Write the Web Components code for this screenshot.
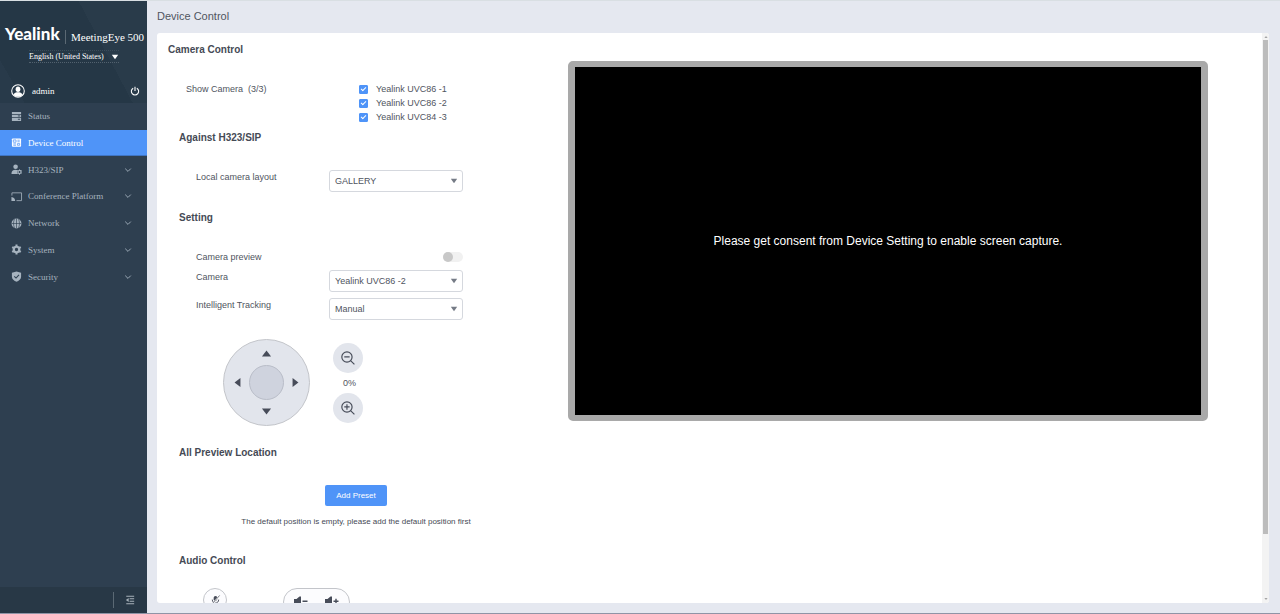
<!DOCTYPE html>
<html lang="en">
<head>
<meta charset="utf-8">
<meta name="viewport" content="width=device-width, initial-scale=1">
<title>Device Control</title>
<style>
html, body { margin: 0; height: 100%; }
body { font-family: "Liberation Sans", Arial, sans-serif; font-size: 9px; line-height: 14px; color: #4f545e; background: #e5e8f0; }
</style>
</head>
<body>
<meeting-app></meeting-app>
<script>
const define = (name, markup, setup) => {
  const template = document.createElement('template');
  template.innerHTML = markup;
  customElements.define(name, class extends HTMLElement {
    constructor() {
      super();
      this.attachShadow({ mode: 'open' }).append(template.content.cloneNode(true));
    }
    connectedCallback() { if (setup) setup(this, this.shadowRoot); }
  });
};

/* ---------- icons ---------- */
const ICONS = {
  status: '<path d="M1 1h10v2.4H1zM1 4.2h10v2.4H1zM1 7.4h10V11H1z" fill="currentColor"/><path d="M7.500 5.400h2.500M7.500 9h2.500" stroke="#2e3f50"/>',
  device: '<rect x="1" y="1.500" width="10" height="9" rx="1" fill="currentColor"/><path d="M2.500 3.200h3v2.500h-3zM2.500 7.500h3M2.500 9h3M7 3.500h2.500M7 5.200h2.500M7 7.200h2.500v1.800H7z" fill="none" stroke="#4f94f8" stroke-width=".8"/>',
  user: '<circle cx="5" cy="3" r="2.500" fill="currentColor"/><path d="M.500 11c0-3.500 1.500-4.800 4.500-4.800 1 0 1.800.2 2.400.6L6.500 9l.8 2z" fill="currentColor"/><circle cx="9.300" cy="8.700" r="1.700" fill="none" stroke="currentColor" stroke-width="1.300"/><path d="M9.300 6v1M9.300 10.500v1.200M6.800 7.200l1 .6M11 9.600l.8.500M6.900 10.200l.8-.5M11 7.700l.8-.5" stroke="currentColor"/>',
  cast: '<path d="M1 5V2h10.500v8.500H6" fill="none" stroke="currentColor" stroke-width=".9"/><path d="M.500 6.500a4.500 4.500 0 0 1 4 4.500h-4z" fill="currentColor"/>',
  globe: '<circle cx="6" cy="6" r="5.400" fill="currentColor"/><path d="M6 .6v10.800M.600 6h10.800M3.800 1.200c-1.400 3-1.400 6.600 0 9.600M8.200 1.200c1.400 3 1.400 6.600 0 9.600" fill="none" stroke="#2e3f50" stroke-width=".7"/>',
  gear: '<circle cx="6" cy="6" r="3" fill="none" stroke="currentColor" stroke-width="2.400"/><path d="M6 .600v2M6 9.400v2M1.300 3.300l1.700 1M9 7.700l1.700 1M1.300 8.700l1.700-1M9 4.300l1.700-1" stroke="currentColor" stroke-width="2.200"/>',
  shield: '<path d="M6 .500l5 1.500v4.500c0 2.400-2.400 4.200-5 5.200-2.600-1-5-2.800-5-5.200V2z" fill="currentColor"/><path d="M3.600 5.800l1.900 1.900 3.200-3.400" fill="none" stroke="#2e3f50" stroke-width="1.200"/>',
  chevron: '<path d="M3.200 4.600L6 7.400l2.800-2.800" fill="none" stroke="currentColor" stroke-width=".9"/>',
  caret: '<path d="M1.200 2.800h9.600L6 9.200z" fill="currentColor"/>',
  avatar: '<circle cx="6" cy="6" r="5.400" fill="none" stroke="currentColor" stroke-width=".9"/><ellipse cx="6" cy="4.500" rx="2" ry="2.300" fill="currentColor"/><path d="M2.100 9.500C2.500 7.700 4 7.300 5 7h2c1 .3 2.500.7 2.900 2.500C8.800 10.500 7.500 11 6 11s-2.800-.5-3.900-1.500z" fill="currentColor"/>',
  power: '<path d="M3.800 2.600a4.400 4.400 0 1 0 4.400 0" fill="none" stroke="currentColor" stroke-width="1.300"/><path d="M6 1v5" stroke="currentColor" stroke-width="1.300"/>',
  collapse: '<path d="M1.500 1.500h9.500M5.500 4.500H11M5.500 7.500H11M1.500 10.500h9.500" stroke="currentColor" stroke-width="1.200"/><path d="M4.400 3.500v5L1 6z" fill="currentColor"/>',
  minus: '<circle cx="5.100" cy="5.100" r="4.400" fill="none" stroke="currentColor" stroke-width="1"/><path d="M2.800 5.100h4.600M8.200 8.200l3.300 3.300" fill="none" stroke="currentColor" stroke-width="1"/>',
  plus: '<circle cx="5.100" cy="5.100" r="4.400" fill="none" stroke="currentColor" stroke-width="1"/><path d="M2.800 5.100h4.600M5.100 2.800v4.600M8.200 8.200l3.300 3.300" fill="none" stroke="currentColor" stroke-width="1"/>',
  arrow: '<path d="M1 9.200L6 2.800l5 6.400z" fill="currentColor"/>',
  mic: '<rect x="4" y="1" width="4" height="6" rx="2" fill="currentColor"/><path d="M2.500 5c0 5 7 5 7 0M6 9v2M4 11h4" fill="none" stroke="currentColor"/><path d="M10.500 1l-8 9" stroke="#fff" stroke-width="1.800"/><path d="M10.500.500l-8 9" stroke="currentColor" stroke-width=".8"/>',
  quieter: '<path d="M-1 3h2.500l3-2.500H6v10H4.500L1.500 8H-1zM7.500 4.500h5V6h-5z" fill="currentColor"/>',
  louder: '<path d="M-1 3h2.500l3-2.500H6v10H4.500L1.500 8H-1zM7.500 4.500h5V6h-5zM9.300 2.700h1.400v5H9.300z" fill="currentColor"/>'
};
customElements.define('ui-icon', class extends HTMLElement {
  static observedAttributes = ['name'];
  constructor() { super(); this.attachShadow({ mode: 'open' }); }
  attributeChangedCallback() {
    this.shadowRoot.innerHTML = `<style>:host{display:block;flex:none;width:12px;height:12px}svg{display:block;width:100%;height:100%;overflow:visible}</style>
      <svg viewBox="0 0 12 12" aria-hidden="true">${ICONS[this.getAttribute('name')] || ''}</svg>`;
  }
});

/* ---------- sidebar ---------- */
define('nav-item', `<style>
  :host { display: grid; color: #a6b3bf; }
  a { display: flex; align-items: center; gap: 6px; padding: 0 13px 0 11px; color: inherit; text-decoration: none; }
  ui-icon { width: 11px; height: 11px; }
  span { flex: 1; }
  .more { width: 12px; height: 12px; }
  :host([active]) { background: #4f94f8; color: #fff; }
  :host([active]) a { border-bottom: 1px solid #3f75c4; }
</style><a href="#"><ui-icon></ui-icon><span><slot></slot></span></a>`, (host, root) => {
  root.querySelector('ui-icon').setAttribute('name', host.getAttribute('icon'));
  if (host.hasAttribute('more')) {
    const more = document.createElement('ui-icon');
    more.className = 'more';
    more.setAttribute('name', 'chevron');
    root.querySelector('a').append(more);
  }
});

define('side-bar', `<style>
  :host { display: flex; flex-direction: column; background: #2e3f50; color: #fff; font-family: "Liberation Serif", "Times New Roman", serif; font-size: 9px; }
  header { display: flex; flex-direction: column; height: 102px; background: linear-gradient(60deg, #283a4a 12%, transparent 12%), linear-gradient(62deg, #253746 66%, #293b4a 66%); }
  .brand { display: flex; align-items: flex-end; padding: 23px 0 0 5px; height: 20px; white-space: nowrap; }
  .brand b { font: 900 17px/20px Lato, sans-serif; width: 60px; }
  .brand span { font-size: 11px; line-height: 14px; padding-left: 5px; border-left: 1px solid #5b6974; }
  .lang { display: flex; align-items: center; width: 90px; margin: 6px 0 0 29px; border-top: 1px dotted #3b4c5a; border-bottom: 1px dotted #52616e; }
  .lang select { flex: 1; min-width: 0; appearance: none; border: 0; padding: 0; margin: 0; background: none; color: #fff; font: 8px/11px "Liberation Serif", serif; height: 11px; }
  .lang ui-icon { width: 8px; height: 8px; }
  .user { display: flex; align-items: center; margin-top: auto; padding: 0 7px 5px 11px; gap: 7px; }
  .user ui-icon { width: 14px; height: 14px; }
  .user span { flex: 1; }
  button { appearance: none; border: 0; padding: 0; background: none; color: inherit; }
  .user button ui-icon { width: 10px; height: 10px; }
  nav { display: grid; grid-template-rows: repeat(7, 1fr); height: 187px; }
  footer { display: flex; align-items: center; justify-content: flex-end; margin-top: auto; height: 26px; padding-right: 12px; background: #283846; color: #a7b1ba; }
  footer button { padding-left: 11px; border-left: 1px solid #5b6974; height: 16px; }
  footer ui-icon { width: 10px; height: 10px; }
</style>
<header>
  <div class="brand"><b>Yealink</b><span>MeetingEye 500</span></div>
  <div class="lang"><select aria-label="Language"><option>English (United States)</option></select><ui-icon name="caret"></ui-icon></div>
  <div class="user"><ui-icon name="avatar"></ui-icon><span>admin</span><button aria-label="Sign out"><ui-icon name="power"></ui-icon></button></div>
</header>
<nav>
  <nav-item icon="status">Status</nav-item>
  <nav-item icon="device" active>Device Control</nav-item>
  <nav-item icon="user" more>H323/SIP</nav-item>
  <nav-item icon="cast" more>Conference Platform</nav-item>
  <nav-item icon="globe" more>Network</nav-item>
  <nav-item icon="gear" more>System</nav-item>
  <nav-item icon="shield" more>Security</nav-item>
</nav>
<footer><button aria-label="Collapse menu"><ui-icon name="collapse"></ui-icon></button></footer>`);

/* ---------- form parts ---------- */
define('section-title', `<style>
  :host { display: block; }
  h2 { margin: 0; font-size: 10px; line-height: 14px; font-weight: 700; color: #454a55; }
</style><h2><slot></slot></h2>`);

define('check-option', `<style>
  :host { display: block; height: 14px; }
  label { display: flex; align-items: center; gap: 8px; height: 14px; white-space: pre; }
  input { appearance: none; display: grid; place-items: center; margin: 0; width: 9px; height: 9px; border-radius: 1px; background: #fff; border: 1px solid #4f94f8; box-sizing: border-box; }
  input:checked { background: #4f94f8; }
  input:checked::before { content: ""; width: 2px; height: 4px; margin-bottom: 1px; border: solid #fff; border-width: 0 1px 1px 0; transform: rotate(45deg); }
</style><label><input type="checkbox" checked><span></span></label>`, (host, root) => {
  root.querySelector('span').textContent = host.getAttribute('label');
});

define('select-field', `<style>
  :host { display: grid; grid-template-columns: 133px 134px; }
  .box { display: grid; align-items: center; }
  select, ui-icon { grid-area: 1 / 1; }
  select { appearance: none; width: 100%; height: 22px; margin: 0; padding: 0 18px 0 5px; border: 1px solid #d5d8de; border-radius: 3px; background: #fff; color: #4f545e; font: inherit; }
  ui-icon { width: 8px; height: 8px; justify-self: end; margin-right: 5px; color: #757b86; pointer-events: none; }
</style><label for="s"></label><div class="box"><select id="s"><option></option></select><ui-icon name="caret"></ui-icon></div>`, (host, root) => {
  root.querySelector('label').textContent = host.getAttribute('label');
  root.querySelector('option').textContent = host.getAttribute('value');
});

define('switch-field', `<style>
  :host { display: grid; grid-template-columns: 133px 134px; align-items: center; }
  input { appearance: none; justify-self: end; margin: 0; width: 20px; height: 10px; border-radius: 5px; background: #f1f1f1; display: flex; }
  input::before { content: ""; width: 10px; height: 10px; border-radius: 50%; background: #c8c8c8; }
  input:checked { background: #4f94f8; justify-content: flex-end; }
</style><label for="t"><slot></slot></label><input id="t" type="checkbox" role="switch" aria-label="Camera preview">`);

/* ---------- pan / tilt / zoom ---------- */
define('ptz-pad', `<style>
  :host { display: grid; box-sizing: border-box; width: 87px; height: 87px; padding: 8px; border: 1px solid #c3c5ca; border-radius: 50%; background: #e2e5ec; grid-template: 17px 1fr 17px / 17px 1fr 17px; place-items: center; }
  button { appearance: none; border: 0; padding: 0; background: none; color: #474c59; }
  ui-icon { width: 11px; height: 11px; }
  .up { grid-area: 1 / 2; align-self: start; } .left { grid-area: 2 / 1; justify-self: start; } .right { grid-area: 2 / 3; justify-self: end; } .down { grid-area: 3 / 2; align-self: end; }
  .left ui-icon { transform: rotate(-90deg); } .right ui-icon { transform: rotate(90deg); } .down ui-icon { transform: rotate(180deg); }
  .home { grid-area: 2 / 2; width: 35px; height: 35px; border: 1px solid #b9bdc8; border-radius: 50%; background: #cfd3de; }
</style>
<button class="up" aria-label="Up"><ui-icon name="arrow"></ui-icon></button>
<button class="left" aria-label="Left"><ui-icon name="arrow"></ui-icon></button>
<button class="home" aria-label="Home"></button>
<button class="right" aria-label="Right"><ui-icon name="arrow"></ui-icon></button>
<button class="down" aria-label="Down"><ui-icon name="arrow"></ui-icon></button>`);

define('zoom-control', `<style>
  :host { display: flex; flex-direction: column; align-items: center; gap: 3px; }
  button { appearance: none; display: grid; place-items: center; width: 30px; height: 30px; padding: 0; border: 0; border-radius: 50%; background: #e2e5ec; color: #474c59; }
  ui-icon { width: 14px; height: 14px; }
  span { padding-left: 3px; }
</style>
<button aria-label="Zoom out"><ui-icon name="minus"></ui-icon></button>
<span>0%</span>
<button aria-label="Zoom in"><ui-icon name="plus"></ui-icon></button>`);

define('audio-controls', `<style>
  :host { display: flex; align-items: flex-start; gap: 56px; }
  button { appearance: none; padding: 0; border: 0; background: none; color: #474c59; }
  .mic { display: grid; place-items: center; width: 24px; height: 24px; border: 1px solid #c3c5ca; border-radius: 50%; background: #fcfcfe; box-sizing: border-box; }
  .mic ui-icon { width: 11px; height: 11px; }
  .volume { display: flex; justify-content: space-between; align-items: center; box-sizing: border-box; width: 67px; height: 28px; padding: 0 11px; border: 1px solid #c3c5ca; border-radius: 14px; background: #fcfcfe; }
</style>
<button class="mic" aria-label="Mute microphone"><ui-icon name="mic"></ui-icon></button>
<div class="volume"><button aria-label="Volume down"><ui-icon name="quieter"></ui-icon></button><button aria-label="Volume up"><ui-icon name="louder"></ui-icon></button></div>`);

define('video-preview', `<style>
  :host { display: grid; place-items: center; box-sizing: border-box; aspect-ratio: 16 / 9; border: solid #a9a9a9; border-width: 6px 7px; border-radius: 5px; background: #000; color: #fff; font-size: 12px; line-height: 16px; text-align: center; }
</style><p><slot></slot></p>`);

define('scroll-rail', `<style>
  :host { display: grid; grid-template-rows: 7px 1fr 8px; width: 7px; background: #f3f3f3; color: #a5a5a5; justify-items: center; align-items: center; }
  i { justify-self: stretch; align-self: start; height: 89%; margin: 0 1px; background: #bcbcbc; }
  ui-icon { width: 4px; height: 4px; }
  .up { transform: rotate(180deg); }
</style><ui-icon class="up" name="caret"></ui-icon><i></i><ui-icon name="caret"></ui-icon>`);

/* ---------- page ---------- */
define('device-page', `<style>
  :host { display: flex; flex-direction: column; min-height: 0; min-width: 0; }
  h1 { margin: 0; padding: 8px 10px 9px; font-size: 11px; line-height: 15px; font-weight: 400; color: #50555f; }
  .card { display: flex; flex: 1; min-height: 0; margin: 0 11px 10px 10px; background: #fff; border-radius: 3px; overflow: hidden; }
  .scroll { display: flex; flex: 1; min-width: 0; padding: 10px 54px 24px 0; overflow: auto; scrollbar-width: none; }
  .form { flex: none; width: 400px; padding-left: 11px; box-sizing: border-box; }
  section { padding-left: 11px; }
  .cameras { display: grid; grid-template-columns: 173px 1fr; padding: 25px 0 7px 18px; }
  .cameras > span { white-space: pre; }
  .fields { display: grid; gap: 6px; padding: 25px 0 19px 17px; }
  .ptz { display: flex; align-items: center; gap: 23px; padding: 0 0 20px 44px; }
  .preset { display: flex; flex-direction: column; align-items: center; gap: 9px; width: 354px; padding: 25px 0; font-size: 8px; color: #454a55; }
  .preset button { appearance: none; margin: 0; border: 0; border-radius: 2px; width: 62px; height: 21px; padding: 0; background: #4f94f8; color: #fff; font: inherit; }
  .audio { padding: 20px 0 0 24px; }
  video-preview { flex: 1; align-self: flex-start; margin: 18px 0 0 11px; }
</style>
<h1>Device Control</h1>
<div class="card">
  <div class="scroll">
    <div class="form">
      <section-title>Camera Control</section-title>
      <div class="cameras"><span>Show Camera  (3/3)</span><div>
        <check-option label="Yealink UVC86 -1"></check-option>
        <check-option label="Yealink UVC86 -2"></check-option>
        <check-option label="Yealink UVC84 -3"></check-option>
      </div></div>
      <section>
        <section-title>Against H323/SIP</section-title>
        <div class="fields"><select-field label="Local camera layout" value="GALLERY"></select-field></div>
        <section-title>Setting</section-title>
        <div class="fields">
          <switch-field>Camera preview</switch-field>
          <select-field label="Camera" value="Yealink UVC86 -2"></select-field>
          <select-field label="Intelligent Tracking" value="Manual"></select-field>
        </div>
        <div class="ptz"><ptz-pad></ptz-pad><zoom-control></zoom-control></div>
        <section-title>All Preview Location</section-title>
        <div class="preset"><button>Add Preset</button><span>The default position is empty, please add the default position first</span></div>
        <section-title>Audio Control</section-title>
        <div class="audio"><audio-controls></audio-controls></div>
      </section>
    </div>
    <video-preview>Please get consent from Device Setting to enable screen capture.</video-preview>
  </div>
  <scroll-rail></scroll-rail>
</div>`);

define('meeting-app', `<style>
  :host { display: grid; grid-template-columns: 147px 1fr; grid-template-rows: minmax(0, 1fr); height: 100vh; box-sizing: border-box; border-top: 1px solid #d9dfe3; border-bottom: 1px solid #8f94a6; }
</style><side-bar></side-bar><device-page></device-page>`);
</script>
</body>
</html>
